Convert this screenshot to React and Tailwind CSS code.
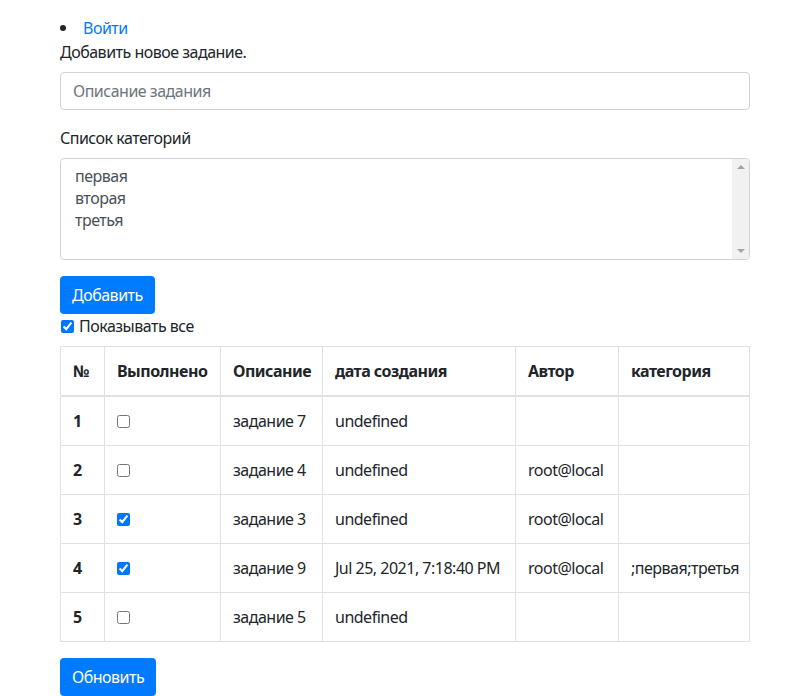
import { useState } from 'react';

const tasks = [
  { id: 1, done: false, desc: 'задание 7', created: 'undefined', author: '', cats: '' },
  { id: 2, done: false, desc: 'задание 4', created: 'undefined', author: 'root@local', cats: '' },
  { id: 3, done: true, desc: 'задание 3', created: 'undefined', author: 'root@local', cats: '' },
  { id: 4, done: true, desc: 'задание 9', created: 'Jul 25, 2021, 7:18:40 PM', author: 'root@local', cats: ';первая;третья' },
  { id: 5, done: false, desc: 'задание 5', created: 'undefined', author: '', cats: '' },
];

const App = () => {
  const [showAll, setShowAll] = useState(true);
  const [rows, setRows] = useState(tasks);

  const toggle = (id) => {
    setRows((prev) => prev.map((r) => (r.id === id ? { ...r, done: !r.done } : r)));
  };

  return (
    <div
      className="min-h-screen bg-white text-[#212529] text-base leading-6 tracking-[-0.5px]"
      style={{ fontFamily: '"Noto Sans", "Open Sans", sans-serif' }}
    >
      <div className="w-[690px] ml-[60px] pt-4">
        {/* nav */}
        <ul className="list-none">
          <li className="flex items-center">
            <span className="w-[6px] h-[6px] mr-[17px] rounded-full bg-[#212529]" />
            <a href="#" className="text-[#007bff] hover:underline">Войти</a>
          </li>
        </ul>

        <div>Добавить новое задание.</div>

        <input
          type="text"
          placeholder="Описание задания"
          className="mt-2 mb-4 block w-full h-[38px] px-3 border border-[#ced4da] rounded text-[#495057] placeholder:text-[#6c757d] outline-none"
        />

        <label className="block mb-2">Список категорий</label>
        <div className="relative">
          <textarea
            defaultValue={'первая\nвторая\nтретья'}
            className="block w-full h-[102px] pl-[14px] pr-6 py-[6px] leading-[22px] border border-[#ced4da] rounded text-[#495057] resize-none outline-none [scrollbar-width:none]"
          />
          {/* fake classic scrollbar */}
          <div className="absolute top-px bottom-px right-px w-[17px] bg-[#f1f1f1] flex flex-col items-center justify-between py-[6px] rounded-r">
            <span className="w-0 h-0 border-x-[4px] border-x-transparent border-b-[4px] border-b-[#a3a3a3]" />
            <span className="w-0 h-0 border-x-[4px] border-x-transparent border-t-[4px] border-t-[#a3a3a3]" />
          </div>
        </div>

        <button className="mt-4 block h-[38px] px-3 bg-[#007bff] text-white rounded">
          Добавить
        </button>

        <label className="flex items-center gap-[5px] h-6">
          <input
            type="checkbox"
            checked={showAll}
            onChange={() => setShowAll(!showAll)}
            className="w-[13px] h-[13px] ml-px"
          />
          <span>Показывать все</span>
        </label>

        <table className="mt-2 mb-4 w-full table-fixed border-collapse border border-[#dee2e6]">
          <colgroup>
            <col className="w-[44px]" />
            <col className="w-[116px]" />
            <col className="w-[102px]" />
            <col className="w-[193px]" />
            <col className="w-[103px]" />
            <col />
          </colgroup>
          <thead>
            <tr className="border-b-2 border-[#dee2e6]">
              {['№', 'Выполнено', 'Описание', 'дата создания', 'Автор', 'категория'].map((h) => (
                <th key={h} className="p-3 text-left align-bottom font-bold border border-[#dee2e6] border-b-2 whitespace-nowrap">
                  {h}
                </th>
              ))}
            </tr>
          </thead>
          <tbody>
            {rows.map((r) => (
              <tr key={r.id}>
                <th className="p-3 text-left font-bold border border-[#dee2e6]">{r.id}</th>
                <td className="p-3 border border-[#dee2e6]">
                  <input
                    type="checkbox"
                    checked={r.done}
                    onChange={() => toggle(r.id)}
                    className="block w-[13px] h-[13px]"
                  />
                </td>
                <td className="p-3 border border-[#dee2e6] whitespace-nowrap">{r.desc}</td>
                <td className="p-3 border border-[#dee2e6] whitespace-nowrap">{r.created}</td>
                <td className="p-3 border border-[#dee2e6] whitespace-nowrap">{r.author}</td>
                <td className="p-3 border border-[#dee2e6] whitespace-nowrap">{r.cats}</td>
              </tr>
            ))}
          </tbody>
        </table>

        <button className="block h-[38px] px-3 bg-[#007bff] text-white rounded">
          Обновить
        </button>
      </div>
    </div>
  );
};

export default App;
